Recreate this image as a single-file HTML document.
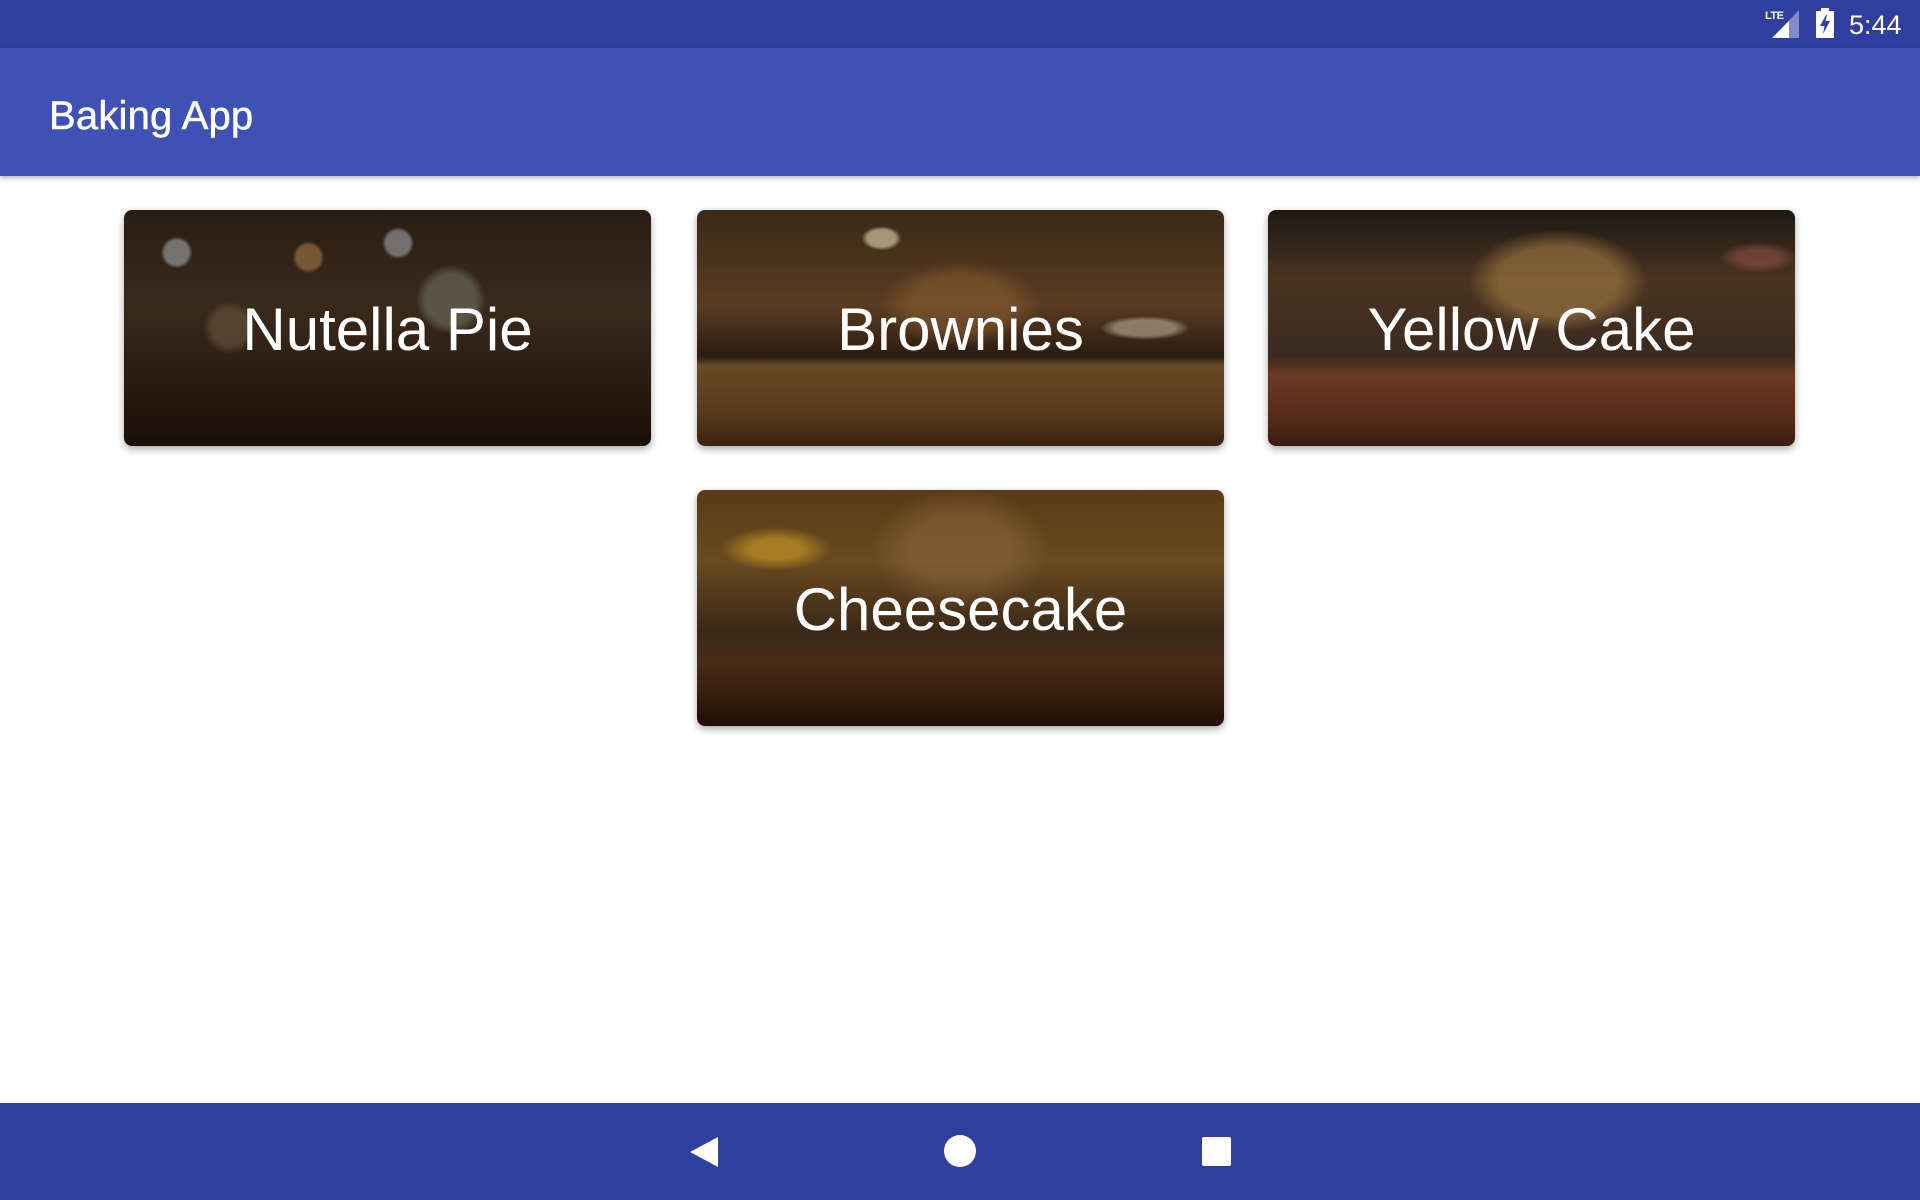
<!DOCTYPE html>
<html><head><meta charset="utf-8"><style>
*{margin:0;padding:0;box-sizing:border-box}
body{width:1920px;height:1200px;background:#fff;position:relative;overflow:hidden;font-family:"Liberation Sans",sans-serif}
.sb{position:absolute;left:0;top:0;width:1920px;height:48px;background:#303F9F}
.ab{position:absolute;left:0;top:48px;width:1920px;height:128px;background:#3F51B5;box-shadow:0 2px 5px rgba(0,0,0,.3)}
.ab span{position:absolute;left:49px;top:46px;color:#fff;font-size:40px;letter-spacing:.2px;-webkit-text-stroke:.5px #fff}
.nb{position:absolute;left:0;top:1103px;width:1920px;height:97px;background:#303F9F}
.card{position:absolute;width:527px;height:236px;border-radius:8px;overflow:hidden;box-shadow:0 3px 8px rgba(0,0,0,.35)}
.card span{position:absolute;left:0;right:0;top:85px;text-align:center;color:#fff;font-size:60px;line-height:70px}
.c1{left:124px;top:210px;background:
radial-gradient(circle at 10% 18%,rgba(170,180,180,.55) 0 12px,transparent 16px),
radial-gradient(circle at 52% 14%,rgba(180,190,200,.5) 0 12px,transparent 16px),
radial-gradient(circle at 35% 20%,rgba(200,150,90,.45) 0 12px,transparent 16px),
radial-gradient(circle at 62% 38%,rgba(140,150,130,.4) 0 25px,transparent 35px),
radial-gradient(circle at 20% 50%,rgba(140,120,90,.35) 0 18px,transparent 26px),
linear-gradient(180deg,#2a1d14 0%,#3a2a1c 40%,#2d1e13 68%,#2a1a10 75%,#1a0f08 100%)}
.c2{left:697px;top:210px;background:
radial-gradient(ellipse at 35% 12%,rgba(230,220,180,.6) 0 14px,transparent 20px),
radial-gradient(ellipse at 85% 50%,rgba(210,200,180,.5) 0 30px,transparent 45px),
radial-gradient(ellipse at 50% 40%,rgba(160,110,60,.4) 0 50px,transparent 80px),
linear-gradient(180deg,#3a2a18 0%,#5a3c20 40%,#2a1c12 62%,#6a4a24 66%,#5a3a1c 85%,#3a2410 100%)}
.c3{left:1268px;top:210px;background:
radial-gradient(ellipse at 55% 30%,rgba(200,150,80,.45) 0 60px,transparent 90px),
radial-gradient(ellipse at 93% 20%,rgba(160,90,80,.5) 0 20px,transparent 40px),
linear-gradient(180deg,#1e1814 0%,#4a3420 30%,#3a2a20 62%,#6a3a22 70%,#5a2e1a 85%,#3a1c10 100%)}
.c4{left:697px;top:490px;background:
radial-gradient(ellipse at 15% 25%,rgba(220,170,40,.55) 0 25px,transparent 55px),
radial-gradient(ellipse at 50% 25%,rgba(150,110,70,.45) 0 50px,transparent 90px),
linear-gradient(180deg,#5a3a14 0%,#6a4a20 30%,#3a2818 60%,#4a2c18 72%,#3a200e 85%,#200e06 100%)}
</style></head><body>
<div class="sb">
<div style="position:absolute;left:1765px;top:10px;color:#fff;font-size:11px;font-weight:bold;letter-spacing:-.5px">LTE</div>
<svg style="position:absolute;left:1772px;top:9px" width="28" height="30" viewBox="0 0 28 30"><polygon points="27,1 27,29 0,29" fill="#fff" opacity=".4"/><polygon points="17,12 17,29 0,29" fill="#fff"/></svg>
<svg style="position:absolute;left:1815px;top:8px" width="20" height="30" viewBox="0 0 20 30"><rect x="6" y="0" width="8" height="3" fill="#fff"/><rect x="1" y="3" width="18" height="27" fill="#fff"/><polygon points="11,7 5,18 9.5,18 8,26 15,13 10.5,13 12,7" fill="#303F9F"/></svg>
<div style="position:absolute;left:1849px;top:10px;color:#fff;font-size:27px">5:44</div>
</div>
<div class="ab"><span>Baking App</span></div>
<div class="card c1"><span>Nutella Pie</span></div>
<div class="card c2"><span>Brownies</span></div>
<div class="card c3"><span>Yellow Cake</span></div>
<div class="card c4"><span>Cheesecake</span></div>
<div class="nb">
<svg style="position:absolute;left:689px;top:33px" width="30" height="32" viewBox="0 0 30 32"><polygon points="29,1 29,31 1,16" fill="#fff"/></svg>
<div style="position:absolute;left:944px;top:32px;width:32px;height:32px;border-radius:50%;background:#fff"></div>
<div style="position:absolute;left:1202px;top:34px;width:29px;height:29px;border-radius:2px;background:#fff"></div>
</div>
</body></html>
